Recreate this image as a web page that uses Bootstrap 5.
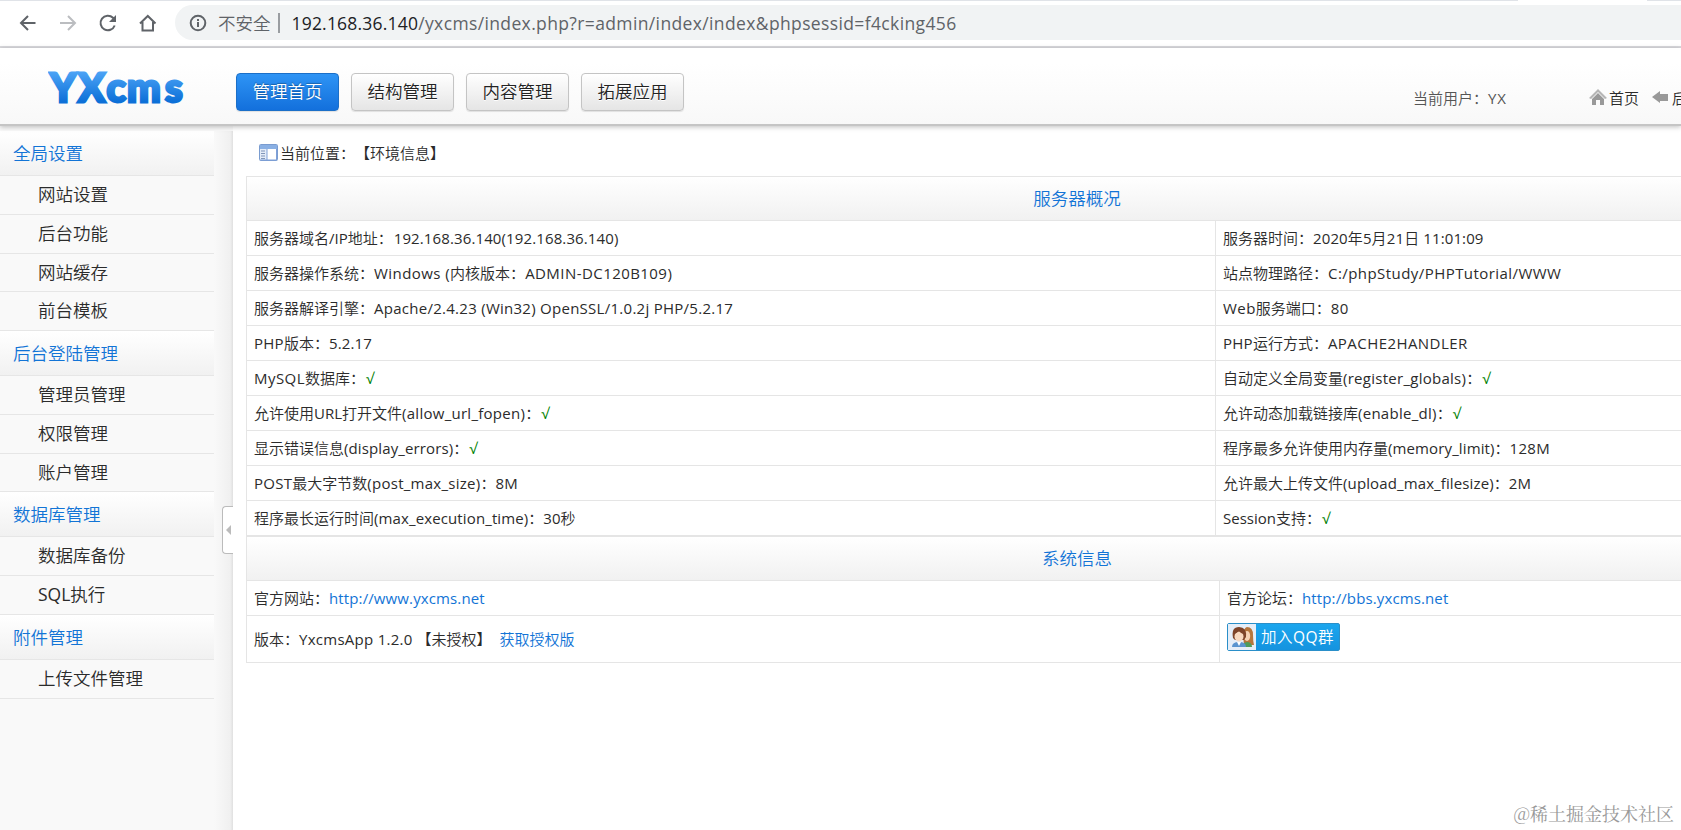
<!DOCTYPE html>
<html lang="zh-CN">
<head>
<meta charset="utf-8">
<title>YXcms</title>
<link href="https://cdn.jsdelivr.net/npm/bootstrap@5.3.0/dist/css/bootstrap.min.css" rel="stylesheet">
<style>
body{font-family:"Open Sans","Noto Sans CJK SC DemiLight","Noto Sans CJK SC Light","Noto Sans CJK SC",sans-serif;font-size:15px;line-height:20px;color:#2b2b2b;height:830px;overflow:hidden;background:#fff}
a{color:#1274d6;text-decoration:none}
.tabline{height:1px;flex:none}
.tabline i{background:#e0e3e8;height:1px}
.browser{height:47px;padding:5px 0 7px 18px;border-bottom:2px solid #dadade;flex:none}
.browser>svg{width:20px;height:20px;margin-right:20px;flex:none}
.omni{height:35px;background:#f1f3f4;border-radius:18px 0 0 18px;margin-left:-3px;padding-left:14px;font-size:17.5px;color:#5f6368;white-space:nowrap}
.omni .sep{width:2px;height:20px;background:#9a9da1;margin:0 12px 0 7px}
.omni b{font-weight:400;color:#202124;letter-spacing:.2px}
.omni .url{letter-spacing:.37px}
.tophead{height:78px;flex:none;background:linear-gradient(#fff 20%,#f8f8f8);border-bottom:2px solid #c5c5c5;box-shadow:0 1px 5px rgba(0,0,0,.25);position:relative;z-index:2;white-space:nowrap}
.logo{width:236px;padding-left:48px}
.nav-yx{gap:12px;padding-top:25px}
.btn-yx{width:103px;height:38px;font-size:17.5px;line-height:34px;padding:0;border:1px solid #c4c4c4;border-radius:4px;background:linear-gradient(#fff,#e5e5e5);color:#222;box-shadow:0 1px 1px rgba(0,0,0,.1);text-shadow:0 1px #fff}
.btn-yx.on{background:linear-gradient(#2e94f5,#1370dc);border-color:#1b6fc8;color:#fff;text-shadow:0 -1px 1px rgba(0,0,0,.3)}
.usr{color:#555;width:177px;margin-left:auto;padding-top:40px}
.quick{padding-top:40px;width:91px}
.side{width:233px;background:#f9f9f9;position:relative;flex:none}
.menu{width:214px;padding-top:5px;font-size:17.5px}
.menu h6{margin:0;height:45px;line-height:44px;padding-left:13px;font-size:17.5px;font-weight:400;color:#1274d6;background:linear-gradient(#fff,#f1f1f1);border-bottom:1px solid #e6e6e6}
.menu a{display:block;height:38.75px;line-height:36.5px;padding-left:38px;color:#222;border-bottom:1px solid #e6e6e6}
.shade{width:19px;margin-top:5px;background:linear-gradient(90deg,#f9f9f9,#f0f0f0 85%,#e0e0e0)}
.grip{position:absolute;left:222px;top:380px;width:11px;height:48px;background:#fff;border:1px solid #bbb;border-right:0;border-radius:4px 0 0 4px}
.grip:after{content:"";position:absolute;left:3px;top:18px;border:5px solid transparent;border-left:0;border-right-color:#bbb}
.main{padding:5px 0 0 13px;width:1674px;flex:none}
.crumb{height:45px;padding:0 0 2px 13px}
.info{width:1661px;table-layout:fixed;border-collapse:separate;border-spacing:0;border:1px solid #e5e5e5;border-width:1px 0 0 1px}
.info th{height:44px;padding:0 0 2px;text-align:center;font-size:17.5px;font-weight:400;color:#1274d6;background:linear-gradient(#fff,#f1f1f1);border-bottom:1px solid #e5e5e5}
.info td{height:35px;padding:0 7px;border-right:1px solid #e5e5e5;border-bottom:1px solid #e5e5e5;white-space:nowrap}
.info tr.tall td{height:47px}
.info em{font-style:normal;color:green;margin-left:1px}
.w1{letter-spacing:.12px}.w2{letter-spacing:.27px}.w4{letter-spacing:.44px}
.qq{width:113px;height:28px;border:1px solid #2a8fc9;border-radius:2px;background:linear-gradient(#1ba6ee,#1593df);color:#fff;font-size:15.5px;margin-top:-5px}
.qq svg{width:28px;height:26px}
.water{position:absolute;right:7px;bottom:7px;font-family:"Noto Serif CJK SC","Open Sans","Noto Sans CJK SC",serif;font-size:18px;color:#999}
</style>
</head>
<body class="d-flex flex-column position-relative">
<div class="tabline d-flex justify-content-between"><i style="width:1518px"></i><i style="width:34px"></i></div>
<div class="browser d-flex align-items-center">
<svg viewBox="0 0 20 20" fill="none" stroke="#5f6368" stroke-width="2"><path d="M17.500 10H3M10 3l-7 7 7 7"/></svg>
<svg viewBox="0 0 20 20" fill="none" stroke="#bbbdc0" stroke-width="2"><path d="M2 10h15M10 3l7 7-7 7"/></svg>
<svg viewBox="0 0 20 20" fill="none" stroke="#5f6368" stroke-width="2"><path d="M16.700 12.500A7.300 7.300 0 1 1 15 4.800L17 7"/><path d="M18 2v7h-7z" fill="#5f6368" stroke="none"/></svg>
<svg viewBox="0 0 20 20" fill="none" stroke="#5f6368" stroke-width="2"><path d="M2 10.500L9.800 3l7.700 7.500M4.500 9v8.500h10.500V9"/></svg>
<div class="omni flex-grow-1 d-flex align-items-center"><svg width="18" height="18" viewBox="0 0 18 18" fill="none" stroke="#5f6368" stroke-width="2" class="me-2"><circle cx="9" cy="9" r="7.300"/><path d="M9 8v5M9 5v2"/></svg><span style="margin-left:3px">不安全</span><span class="sep"></span><span class="url"><b>192.168.36.140</b>/yxcms/index.php?r=admin/index/index&amp;phpsessid=f4cking456</span></div>
</div>
<header class="tophead d-flex">
<div class="logo"><svg width="140" height="62" viewBox="0 0 140 62"><defs><linearGradient id="lg" x1="0" y1="0" x2="0" y2="1"><stop offset=".2" stop-color="#4aa2f5"/><stop offset=".8" stop-color="#0d70d8"/></linearGradient></defs><text x="2 30 58.500 79 117" y="54" font-family="Lato" font-weight="900" font-size="40" fill="url(#lg)" stroke="url(#lg)" stroke-width="2.800">YXcms</text></svg></div>
<nav class="d-flex nav-yx"><a class="btn btn-yx on">管理首页</a><a class="btn btn-yx">结构管理</a><a class="btn btn-yx">内容管理</a><a class="btn btn-yx">拓展应用</a></nav>
<div class="usr">当前用户：<span style="letter-spacing:.8px">YX</span></div>
<div class="d-flex quick"><svg width="18" height="18" viewBox="0 0 18 18" class="flex-shrink-0" style="margin:0 2px 0 -1px"><path d="M0 10L9 1l9 9-2 1-7-7-7 7z" fill="#b5b5b5"/><path d="M3 11l6-6 6 6v6h-4v-5H7v5H3z" fill="#999"/></svg>首页<svg width="17" height="16" viewBox="0 0 17 16" class="flex-shrink-0" style="margin:1px 3px 0 13px"><path d="M0 8l8-6v3h8v7H8v2z" fill="#999"/></svg>后台</div>
</header>
<div class="d-flex flex-grow-1 overflow-hidden">
<aside class="side d-flex">
<nav class="menu"><h6>全局设置</h6><a>网站设置</a><a>后台功能</a><a>网站缓存</a><a>前台模板</a><h6>后台登陆管理</h6><a>管理员管理</a><a>权限管理</a><a>账户管理</a><h6>数据库管理</h6><a>数据库备份</a><a>SQL执行</a><h6>附件管理</h6><a>上传文件管理</a></nav>
<div class="shade"></div><div class="grip"></div>
</aside>
<main class="main">
<div class="crumb d-flex align-items-center"><svg width="19" height="17" viewBox="0 0 19 17" style="margin-right:2px"><rect x=".5" y=".5" width="18" height="16" rx="1" fill="#fff" stroke="#7a9cd0"/><path d="M1 1h17v4H1z" fill="#8ab0e4"/><path d="M1 5h7v11H1z" fill="#e4ecf8"/><path d="M2 7h4M2 9.500h4M2 12h4M2 14.500h4" stroke="#8095b8"/><path d="M8 5v11M17.500 5v11M1 16h17" stroke="#7fa0d8"/></svg><span>当前位置：</span><span>【环境信息】</span></div>
<table class="info"><colgroup><col style="width:969px"><col></colgroup>
<tr><th colspan="2">服务器概况</th></tr>
<tr><td>服务器域名/IP地址：<span class="w1 ps-1" style="margin-left:-3px">192.168.36.140(192.168.36.140)</span></td><td>服务器时间：<span class="w1">2020年5月21日 11:01:09</span></td></tr>
<tr><td>服务器操作系统：<span class="w4">Windows (</span>内核版本：<span class="w4">ADMIN-DC120B109)</span></td><td>站点物理路径：<span class="w4">C:/phpStudy/PHPTutorial/WWW</span></td></tr>
<tr><td>服务器解译引擎：<span class="w2">Apache/2.4.23 (Win32) OpenSSL/1.0.2j PHP/5.2.17</span></td><td><span class="w4">Web</span>服务端口：<span class="w2">80</span></td></tr>
<tr><td><span class="w2">PHP</span>版本：<span class="w1">5.2.17</span></td><td><span class="w2">PHP</span>运行方式：<span class="w4">APACHE2HANDLER</span></td></tr>
<tr><td><span class="w4">MySQL</span>数据库：<em>√</em></td><td>自动定义全局变量<span class="w2">(register_globals)</span>：<em>√</em></td></tr>
<tr><td>允许使用URL打开文件<span class="w2">(allow_url_fopen)</span>：<em>√</em></td><td>允许动态加载链接库<span class="w2">(enable_dl)</span>：<em>√</em></td></tr>
<tr><td>显示错误信息<span class="w1">(display_errors)</span>：<em>√</em></td><td>程序最多允许使用内存量<span class="w1">(memory_limit)</span>：<span class="w2">128M</span></td></tr>
<tr><td><span class="w2">POST</span>最大字节数<span class="w2">(post_max_size)</span>：<span class="w2">8M</span></td><td>允许最大上传文件<span class="w1">(upload_max_filesize)</span>：<span class="w2">2M</span></td></tr>
<tr><td>程序最长运行时间<span class="w1">(max_execution_time)</span>：30秒</td><td>Session支持：<em>√</em></td></tr>
</table>
<table class="info"><colgroup><col style="width:973px"><col></colgroup>
<tr><th colspan="2">系统信息</th></tr>
<tr><td>官方网站：<a href="#" class="w1">http://www.yxcms.net</a></td><td>官方论坛：<a href="#" class="w1">http://bbs.yxcms.net</a></td></tr>
<tr class="tall"><td>版本：<span class="w2">YxcmsApp 1.2.0</span> 【未授权】 <a href="#" style="margin-left:4px">获取授权版</a></td><td><div class="qq d-flex align-items-center"><svg viewBox="0 0 28 26"><path d="M0 0h28v26H0z" fill="#e6eef8"/><path d="M16 21q-2-17 3-18 6 0 6 8 0 6 1 10z" fill="#b5753c"/><ellipse cx="19" cy="12" rx="3.200" ry="5" fill="#f6d2b4"/><path d="M14 23q1-5 6-5 4 1 4 5z" fill="#4d9b5b"/><path d="M5 14Q3 3 11 3t7 10l-2 3H7z" fill="#7e4429"/><ellipse cx="11" cy="12.500" rx="4.500" ry="5" fill="#f8d9c0"/><path d="M6 10q3-1 5-3 2 3 5 3-1-5-5-5t-5 5z" fill="#7e4429"/><path d="M4 23q0-5 7-5t7 5z" fill="#5b94cf"/><path d="M9 18h4l-2 4z" fill="#fff"/></svg><span style="margin-left:5px;letter-spacing:.5px">加入QQ群</span></div></td></tr>
</table>
</main>
</div>
<div class="water">@稀土掘金技术社区</div>
<script src="https://cdn.jsdelivr.net/npm/bootstrap@5.3.0/dist/js/bootstrap.bundle.min.js"></script>
</body>
</html>
